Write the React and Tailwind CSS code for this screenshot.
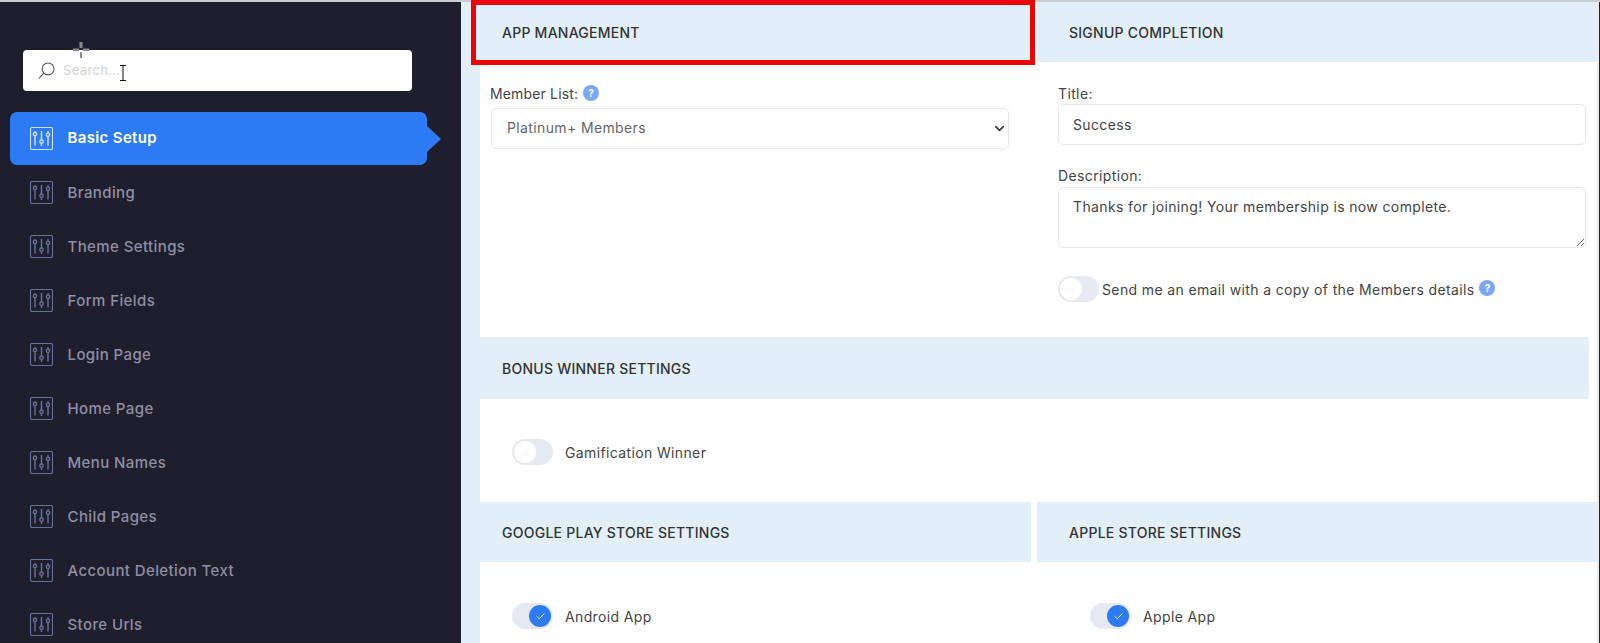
import { ChevronDown, Check, X } from 'lucide-react';

const navItems = [
  'Basic Setup', 'Branding', 'Theme Settings', 'Form Fields', 'Login Page',
  'Home Page', 'Menu Names', 'Child Pages', 'Account Deletion Text', 'Store Urls',
];

function SliderIcon({ className }) {
  return (
    <svg viewBox="0 0 23 23" fill="none" stroke="currentColor" strokeWidth="1.1" className={className}>
      <rect x="0.5" y="0.5" width="22" height="22" rx="1.5" />
      <path d="M5 9v9.5M5 4v1.5M11.5 4v9M11.5 16.5V19M18 9.5v9M18 4v2" strokeWidth="1.4" />
      <circle cx="5" cy="7" r="1.7" strokeWidth="1.3" />
      <circle cx="11.5" cy="14.7" r="1.7" strokeWidth="1.3" />
      <circle cx="18" cy="7.8" r="1.7" strokeWidth="1.3" />
    </svg>
  );
}

function Help() {
  return (
    <span className="inline-flex h-4 w-4 items-center justify-center rounded-full bg-[#7ba7f7] text-[10px] font-bold leading-none tracking-normal text-white">
      ?
    </span>
  );
}

function Toggle({ on }) {
  return (
    <button className="flex h-[26px] w-[41px] shrink-0 items-center rounded-full bg-[#e6e9f2] px-[2px]">
      {on ? (
        <span className="ml-auto flex h-[22px] w-[22px] items-center justify-center rounded-full bg-[#2d7bf4] text-white">
          <Check size={11} />
        </span>
      ) : (
        <span className="flex h-[22px] w-[22px] items-center justify-center rounded-full bg-white text-[#eef0f5]">
          <X size={11} />
        </span>
      )}
    </button>
  );
}

function Heading({ children, className = 'pl-[22px]' }) {
  return (
    <div className={`flex items-center bg-[#e2eff8] text-[14px] font-medium tracking-[0.25px] text-[#333] ${className}`}>
      {children}
    </div>
  );
}

export default function App() {
  return (
    <div
      className="flex h-screen flex-col overflow-hidden bg-white text-[14px] tracking-[0.37px] text-[#444]"
      style={{ fontFamily: 'Inter, "Noto Sans", sans-serif' }}
    >
      <div className="h-[2px] shrink-0 bg-[#c9ccd1]" />
      <div className="flex min-h-0 flex-1">
        {/* Sidebar */}
        <aside className="relative w-[461px] shrink-0 bg-[#1e1e2d]">
          <div className="px-[23px] pt-[48px]">
            <div className="flex h-[41px] w-[389px] items-center gap-[8px] rounded-[4px] bg-white pl-[15px]">
              <svg viewBox="0 0 16 16" fill="none" stroke="#555" strokeWidth="1" className="h-[17px] w-[17px] shrink-0">
                <circle cx="9.5" cy="6.5" r="5.6" />
                <path d="M5.5 10.5 1 15.5" />
              </svg>
              <input
                placeholder="Search..."
                className="w-full bg-transparent text-[13px] outline-none placeholder:text-[#d2d2d6]"
              />
            </div>
          </div>
          <nav className="mt-[20px]">
            {navItems.map((label, i) =>
              i === 0 ? (
                <div key={label} className="flex h-[54px] items-center">
                  <div className="relative ml-[10px] flex h-[53px] w-[417px] items-center gap-[14.5px] rounded-[7px] bg-[#2d7bf4] pl-[20px] text-[15px] font-semibold text-white">
                    <SliderIcon className="h-[23px] w-[23px] shrink-0 text-[#d5e4fc]" />
                    <span className="pt-[1px] tracking-[0.35px]">{label}</span>
                    <span className="absolute left-full top-[14px] border-y-[13px] border-l-[14px] border-y-transparent border-l-[#2d7bf4]" />
                  </div>
                </div>
              ) : (
                <div key={label} className="flex h-[54px] items-center gap-[14.5px] pl-[30px] text-[15px] font-medium tracking-[0.4px] text-[#8f8fa3]">
                  <SliderIcon className="h-[23px] w-[23px] shrink-0 text-[#66739a]" />
                  <span className="pt-[2px]">{label}</span>
                </div>
              )
            )}
          </nav>
          {/* mouse cursors caught in the screenshot */}
          <svg viewBox="0 0 16 16" fill="none" className="absolute left-[73px] top-[40px] h-4 w-4">
            <path d="M8 0v6M8 10v6M0 8h6M10 8h6" stroke="#fff" strokeWidth="2.5" />
            <path d="M8 0v6M8 10v6M0 8h6M10 8h6" stroke="#111" strokeWidth="1" />
          </svg>
          <svg viewBox="0 0 8 16" stroke="#111" fill="none" strokeWidth="1" className="absolute left-[119px] top-[63px] h-4 w-2">
            <path d="M1 .5h6M1 15.5h6M4 .5v15" />
          </svg>
        </aside>

        {/* Main */}
        <main className="flex-1 bg-[#e2eff8] pl-[19px]">
          <div className="flex h-full flex-col bg-white">
            <div className="flex h-[335px] gap-[6px]">
              <section className="w-[551px] shrink-0">
                <div className="relative">
                  <Heading className="h-[60px] pl-[22px]">APP MANAGEMENT</Heading>
                  <div className="absolute -bottom-[3px] -left-[9px] -right-[4px] -top-[2px] border-[5px] border-[#ea0606]" />
                </div>
                <div className="pl-[10px] pr-[22px] pt-[21px]">
                  <label className="flex h-[20px] items-center gap-[5px] tracking-[0.15px]">
                    Member List: <Help />
                  </label>
                  <div className="relative ml-[1px] mt-[5px]">
                    <select className="h-[41px] w-full appearance-none rounded-[5px] border border-[#e6e8f0] bg-white pb-[2px] pl-[15px] text-[#666] outline-none">
                      <option>Platinum+ Members</option>
                    </select>
                    <ChevronDown size={15} strokeWidth={2.5} className="absolute right-[2px] top-[13px] text-[#333]" />
                  </div>
                </div>
              </section>
              <section className="flex-1">
                <Heading className="h-[60px] pl-[32px]">SIGNUP COMPLETION</Heading>
                <div className="pl-[21px] pr-[11px] pt-[21px]">
                  <label className="flex h-[20px] items-center">Title:</label>
                  <input
                    defaultValue="Success"
                    className="mt-[1px] h-[41px] w-full rounded-[5px] border border-[#e6e8f0] pl-[14px] outline-none"
                  />
                  <label className="mt-[20px] flex h-[20px] items-center">Description:</label>
                  <textarea
                    defaultValue="Thanks for joining! Your membership is now complete."
                    className="mt-[2px] block h-[61px] w-full rounded-[5px] border border-[#e6e8f0] px-[14px] py-[8px] outline-none"
                  />
                  <div className="mt-[28px] flex items-center gap-[3px]">
                    <Toggle />
                    <span>Send me an email with a copy of the Members details</span>
                    <span className="-mt-[3px] ml-[2px] flex"><Help /></span>
                  </div>
                </div>
              </section>
            </div>

            <Heading className="mr-[8px] h-[62px] pl-[22px]">BONUS WINNER SETTINGS</Heading>
            <div className="flex h-[103px] items-center gap-[12px] pl-[32px] pt-[3px]">
              <Toggle />
              <span>Gamification Winner</span>
            </div>

            <div className="flex gap-[6px]">
              <section className="w-[551px] shrink-0">
                <Heading className="h-[60px] pl-[22px]">GOOGLE PLAY STORE SETTINGS</Heading>
                <div className="mt-[41px] flex items-center gap-[12px] pl-[32px]">
                  <Toggle on />
                  <span>Android App</span>
                </div>
              </section>
              <section className="flex-1">
                <Heading className="h-[60px] pl-[32px]">APPLE STORE SETTINGS</Heading>
                <div className="mt-[41px] flex items-center gap-[12px] pl-[53px]">
                  <Toggle on />
                  <span>Apple App</span>
                </div>
              </section>
            </div>
          </div>
        </main>

        {/* window edge */}
        <div className="w-[2px] shrink-0 bg-[#ececec]" />
        <div className="w-[1px] shrink-0 bg-[#222]" />
      </div>
    </div>
  );
}
